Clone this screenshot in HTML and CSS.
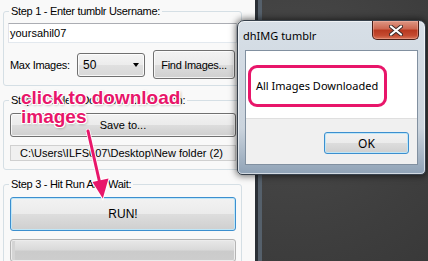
FILE: index.html
```html
<!DOCTYPE html>
<html lang="en">
<head>
  <meta charset="UTF-8" />
  <title>dhIMG tumblr</title>
  <link rel="stylesheet" href="styles.css">
</head>
<body>
  <div class="desktop">

    <div class="app">
      <div class="group">
        <div class="group-title">Step 1 - Enter tumblr Username:</div>
        <div class="textbox">yoursahil07</div>
        <div class="row">
          <span class="lbl">Max Images:</span>
          <div class="combo"><span>50</span><i class="caret"></i></div>
          <div class="btn find-btn">Find Images...</div>
        </div>
      </div>

      <div class="group">
        <div class="group-title">Step 2 - Select Download Destination:</div>
        <div class="btn save-btn">Save to...</div>
        <div class="path">C:\Users\ILFS007\Desktop\New folder (2)</div>
      </div>

      <div class="group">
        <div class="group-title">Step 3 - Hit Run And Wait:</div>
        <div class="btn run-btn">RUN!</div>
        <div class="progress"></div>
      </div>
    </div>

    <div class="backdrop"></div>

    <!-- annotation drawn over the screenshot -->
    <div class="note">click to download<br>images</div>
    <svg class="note-arrow" width="428" height="261" viewBox="0 0 428 261">
      <line x1="88" y1="131" x2="100" y2="184" stroke="#fff" stroke-width="4.5" stroke-linecap="round"/>
      <polygon points="91,181 110,177 103,201" fill="#fff"/>
      <line x1="88" y1="131" x2="100" y2="184" stroke="#e8166a" stroke-width="3" stroke-linecap="round"/>
      <polygon points="92.5,182 108.5,178.5 102.8,198.5" fill="#e8166a"/>
    </svg>

    <div class="dialog">
      <div class="titlebar">dhIMG tumblr</div>
      <div class="close-btn">
        <svg width="14" height="11" viewBox="0 0 14 11">
          <path d="M2 1.5 L12 9.5 M12 1.5 L2 9.5" stroke="#3a2a28" stroke-width="4" stroke-linecap="round"/>
          <path d="M2 1.5 L12 9.5 M12 1.5 L2 9.5" stroke="#fff" stroke-width="2.2" stroke-linecap="round"/>
        </svg>
      </div>
      <div class="client">
        <div class="message">
          All Images Downloaded
          <div class="highlight"></div>
        </div>
        <div class="buttons">
          <div class="btn ok-btn">OK</div>
        </div>
      </div>
    </div>

  </div>
</body>
</html>
```

FILE: styles.css
```css
* { box-sizing: border-box; }
body { margin: 0; width: 428px; height: 261px; overflow: hidden; font-family: "Liberation Sans", Arial, sans-serif; font-size: 11px; color: #000; }

.desktop { position: relative; display: flex; height: 261px; background: #424242; }

/* main window */
.app { flex: none; width: 262px; height: 261px; padding: 11px 0 0 3px; background: #f9f9f9; border-right: 4px solid #55606b; box-shadow: inset -3px 0 #2b3036; }
.group { width: 239px; border: 1px solid #d5dfe5; border-radius: 3px; padding: 0 5px 6px 6px; }
.group + .group { margin-top: 14px; padding-bottom: 8px; }
.group-title { width: fit-content; height: 13px; line-height: 13px; margin: -7px 0 0 -1px; padding: 0 2px; background: #f9f9f9; letter-spacing: -0.3px; }

.textbox { height: 20px; margin: 5px -1px 0 -2px; padding-left: 1px; line-height: 18px; background: #fff; border: 1px solid; border-color: #abadb3 #dbdfe6 #e3e9ef #e2e3ea; }
.row { display: flex; align-items: center; height: 29px; margin-top: 7px; }
.lbl { width: 67px; letter-spacing: -0.3px; }

.btn { display: flex; align-items: center; justify-content: center; border: 1px solid #707070; border-radius: 3px; background: linear-gradient(#f2f2f2, #ebebeb 50%, #dddddd 50%, #cfcfcf); box-shadow: inset 0 0 0 1px rgba(255,255,255,.75); }
.combo { display: flex; align-items: center; justify-content: space-between; width: 68px; height: 24px; padding: 0 5px 0 5px; border: 1px solid #707070; border-radius: 3px; background: linear-gradient(#f4f4f4, #ececec 50%, #e0e0e0 50%, #d8d8d8); box-shadow: inset 0 0 0 1px rgba(255,255,255,.8); font-size: 12px; }
.caret { width: 0; height: 0; border-left: 3.5px solid transparent; border-right: 3.5px solid transparent; border-top: 4px solid #000; }
.find-btn { width: 82px; height: 29px; margin-left: 8px; letter-spacing: -0.3px; }

.save-btn { height: 24px; margin-top: 6px; }
.path { height: 16px; margin-top: 8px; padding-left: 9px; line-height: 14px; background: #f0f0f0; border: 1px solid #d0d0d0; }

.run-btn { height: 34px; margin-top: 6px; font-size: 12px; border-color: #3c8fcf; box-shadow: inset 0 0 0 1px #bfe6f7; }
.progress { height: 23px; margin-top: 8px; border: 1px solid #b4b4b4; border-radius: 3px; background: linear-gradient(#e8e8e8, #dadada 45%, #cbcbcb 55%, #cdcdcd); box-shadow: inset 0 0 0 1px #ececec, inset 4px 0 0 #d4d4d4; }

.backdrop { flex: 1; background: radial-gradient(circle at 20% 35%, #4b4b4b, #3e3e3e 70%, #393939); }

/* annotation */
.note { position: absolute; left: 21px; top: 88px; font: bold 19px/19px "Liberation Sans", Arial, sans-serif; color: #e8166a; text-shadow: 1px 0 #fff, -1px 0 #fff, 0 1px #fff, 0 -1px #fff, 1px 1px #fff, -1px -1px #fff, 1px -1px #fff, -1px 1px #fff, 1px 1px 3px rgba(0,0,0,.45); }
.note-arrow { position: absolute; left: 0; top: 0; }

/* message box */
.dialog { position: absolute; left: 237px; top: 20px; width: 189px; height: 155px; display: flex; flex-direction: column; padding: 0 7px 9px; border: 1px solid #36404b; border-radius: 7px 7px 5px 5px; background: linear-gradient(#d7dfe7, #cbd4dd 70%, #8fa2b6); box-shadow: 0 0 7px 1px rgba(0,0,0,.6), inset 0 0 0 1px rgba(255,255,255,.6); font-family: "Noto Sans", "Open Sans", sans-serif; font-size: 11px; }
.titlebar { height: 29px; padding-top: 7px; margin-left: -2px; line-height: 15px; color: #000; }
.close-btn { position: absolute; right: 6px; top: 0; width: 47px; height: 19px; display: flex; align-items: center; justify-content: center; border: 1px solid #4a1f18; border-top: 0; border-radius: 0 0 5px 5px; background: linear-gradient(#dd9784, #cc6650 45%, #b8381f 50%, #c44a30 80%, #d8765a); box-shadow: inset 0 0 0 1px rgba(255,200,185,.35); }
.client { flex: 1; display: flex; flex-direction: column; border: 1px solid #8190a0; background: #fff; }
.message { position: relative; height: 67px; padding: 27px 0 0 10px; line-height: 15px; }
.highlight { position: absolute; left: 2px; top: 14px; width: 139px; height: 42px; border: 3px solid #e8166a; border-radius: 9px; }
.buttons { flex: 1; display: flex; justify-content: flex-end; align-items: flex-start; padding: 13px 8px 0 0; background: #f0f0f0; border-top: 1px solid #dfdfdf; }
.ok-btn { width: 85px; height: 22px; font-size: 12px; border-color: #3c8fcf; box-shadow: inset 0 0 0 1px #bfe6f7; }
```
